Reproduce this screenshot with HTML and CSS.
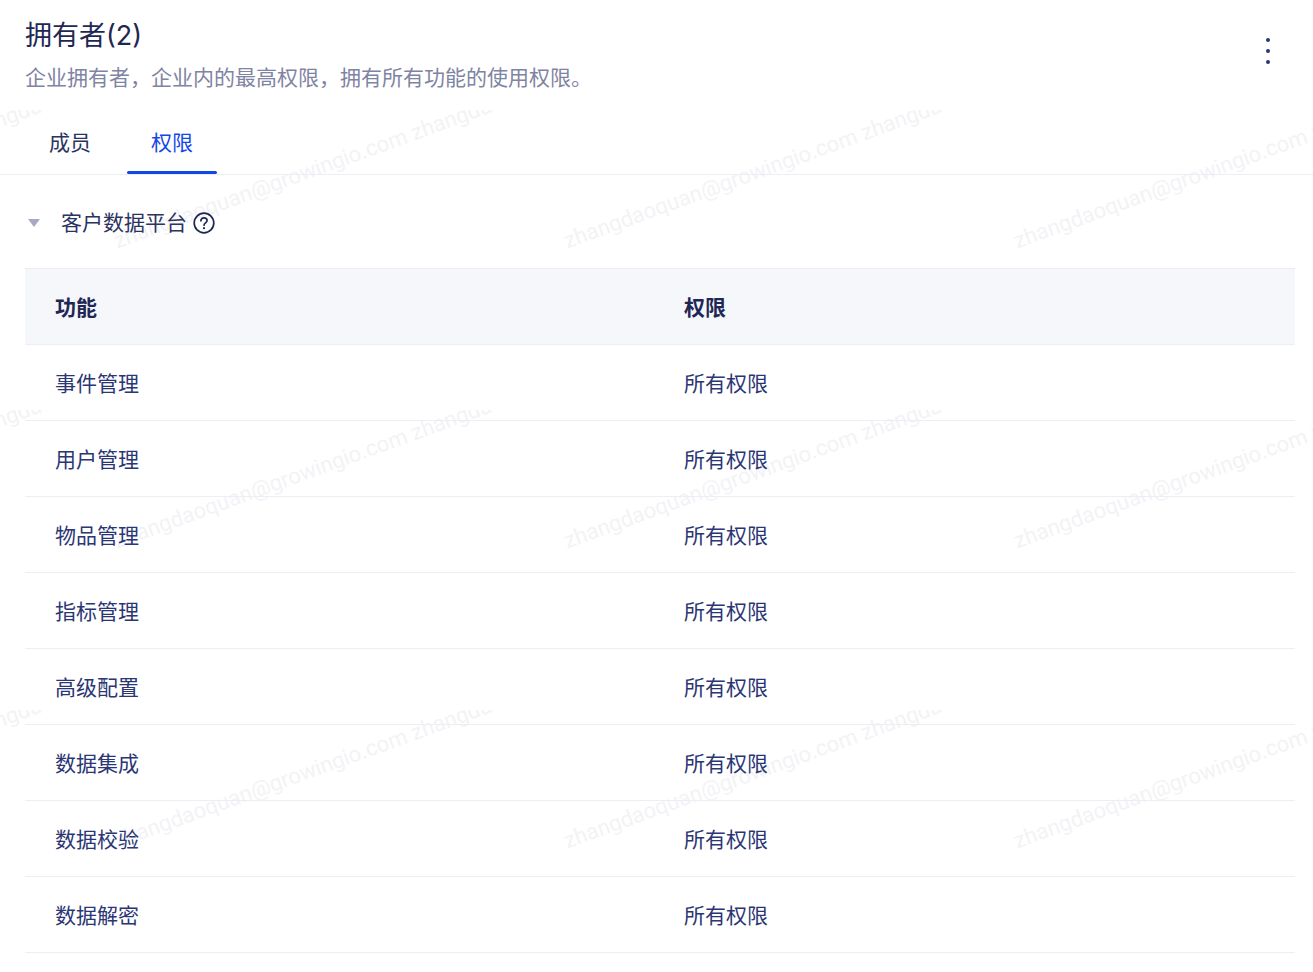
FILE: index.html
```html
<!DOCTYPE html>
<html lang="zh">
<head>
<meta charset="utf-8">
<title>拥有者</title>
<link rel="stylesheet" href="styles.css">
</head>
<body>
<div class="watermark" aria-hidden="true">
  <div class="tile"><span>zhangdaoquan@growingio.com zhangdaoquan@growingio.com</span></div>
  <div class="tile"><span>zhangdaoquan@growingio.com zhangdaoquan@growingio.com</span></div>
  <div class="tile"><span>zhangdaoquan@growingio.com zhangdaoquan@growingio.com</span></div>
  <div class="tile"><span>zhangdaoquan@growingio.com zhangdaoquan@growingio.com</span></div>
  <div class="tile"><span>zhangdaoquan@growingio.com zhangdaoquan@growingio.com</span></div>
  <div class="tile"><span>zhangdaoquan@growingio.com zhangdaoquan@growingio.com</span></div>
  <div class="tile"><span>zhangdaoquan@growingio.com zhangdaoquan@growingio.com</span></div>
  <div class="tile"><span>zhangdaoquan@growingio.com zhangdaoquan@growingio.com</span></div>
  <div class="tile"><span>zhangdaoquan@growingio.com zhangdaoquan@growingio.com</span></div>
  <div class="tile"><span>zhangdaoquan@growingio.com zhangdaoquan@growingio.com</span></div>
  <div class="tile"><span>zhangdaoquan@growingio.com zhangdaoquan@growingio.com</span></div>
  <div class="tile"><span>zhangdaoquan@growingio.com zhangdaoquan@growingio.com</span></div>
</div>
<main class="page">
  <header class="head">
    <div class="head-text">
      <h1 class="title">拥有者(2)</h1>
      <p class="subtitle">企业拥有者，企业内的最高权限，拥有所有功能的使用权限。</p>
    </div>
    <button class="more" type="button" aria-label="更多">
      <i class="dot"></i><i class="dot"></i><i class="dot"></i>
    </button>
  </header>
  <nav class="tabs">
    <a class="tab">成员</a>
    <a class="tab tab-active">权限</a>
  </nav>
  <section class="group">
    <div class="group-head">
      <i class="caret"></i>
      <span class="group-name">客户数据平台</span>
      <svg class="help" width="22" height="22" viewBox="0 0 22 22" fill="none">
        <circle cx="11" cy="11" r="9.8" stroke="#1f2855" stroke-width="1.7"/>
        <path d="M7.9 8.8c0-1.8 1.3-3 3.1-3s3.1 1.2 3.1 2.8c0 2.3-3.1 2.3-3.1 4.6" stroke="#1f2855" stroke-width="1.7" stroke-linecap="round"/>
        <circle cx="11" cy="16.2" r="1.1" fill="#1f2855"/>
      </svg>
    </div>
    <table class="perm">
      <thead>
        <tr><th class="col-a">功能</th><th>权限</th></tr>
      </thead>
      <tbody>
        <tr><td>事件管理</td><td>所有权限</td></tr>
        <tr><td>用户管理</td><td>所有权限</td></tr>
        <tr><td>物品管理</td><td>所有权限</td></tr>
        <tr><td>指标管理</td><td>所有权限</td></tr>
        <tr><td>高级配置</td><td>所有权限</td></tr>
        <tr><td>数据集成</td><td>所有权限</td></tr>
        <tr><td>数据校验</td><td>所有权限</td></tr>
        <tr><td>数据解密</td><td>所有权限</td></tr>
      </tbody>
    </table>
  </section>
</main>
</body>
</html>
```
FILE: styles.css
```css
* { box-sizing: border-box; }
html, body { margin: 0; padding: 0; background: #fff; }
body {
  position: relative;
  height: 972px;
  overflow: hidden;
  font-family: "Noto Sans CJK SC", "Noto Sans", sans-serif;
  color: #2b3674;
}
.watermark {
  position: absolute;
  left: -390px;
  top: 110px;
  width: 1800px;
  display: grid;
  grid-template-columns: repeat(4, 450px);
  grid-auto-rows: 300px;
  pointer-events: none;
}
.tile { position: relative; overflow: hidden; }
.tile span {
  position: absolute;
  left: 60px;
  top: 116px;
  white-space: nowrap;
  font: 22px/30px Roboto, "Liberation Sans", Arial, sans-serif;
  color: #f3f3f6;
  transform-origin: left bottom;
  transform: rotate(-20deg);
}
.page { position: relative; }
.head {
  display: flex;
  justify-content: space-between;
  height: 110px;
  padding: 16px 35px 0 25px;
}
.title {
  margin: 0;
  font-family: "Inter", "Noto Sans CJK SC", sans-serif;
  font-size: 27px;
  line-height: 40px;
  font-weight: 400;
  color: #1f2855;
}
.subtitle {
  margin: 4px 0 0;
  font-size: 21px;
  line-height: 32px;
  color: #7f84a3;
}
.more {
  display: flex;
  flex-direction: column;
  gap: 7px;
  margin: 22px 0 0;
  padding: 0;
  border: 0;
  background: none;
  width: 20px;
  height: 30px;
  align-items: center;
}
.dot { width: 4px; height: 4px; border-radius: 50%; background: #2b3674; }
.tabs {
  display: flex;
  height: 65px;
  padding-left: 25px;
  border-bottom: 1px solid #ecedf5;
}
.tab {
  position: relative;
  width: 90px;
  margin-right: 12px;
  text-align: center;
  font-size: 21px;
  line-height: 63px;
  height: 64px;
  color: #2b3361;
}
.tab-active { color: #1248e9; }
.tab-active::after {
  content: "";
  position: absolute;
  left: 0;
  right: 0;
  bottom: 0;
  height: 3px;
  border-radius: 2px;
  background: #1248e9;
}
.group { padding: 0 18px 0 25px; }
.group-head {
  display: flex;
  align-items: center;
  height: 93px;
  font-size: 21px;
  color: #2b3361;
}
.caret {
  width: 0;
  height: 0;
  margin: 2px 21px 0 3px;
  border-left: 6px solid transparent;
  border-right: 6px solid transparent;
  border-top: 8px solid #a6a9bf;
}
.group-name { line-height: 32px; margin-bottom: 2px; }
.help { margin: 2px 0 0 6px; }
.perm {
  width: 1270px;
  border-collapse: collapse;
  table-layout: fixed;
  font-size: 21px;
}
.perm th, .perm td {
  height: 76px;
  padding: 0 0 2px 30px;
  text-align: left;
  border-bottom: 1px solid #ecedf5;
  font-weight: 400;
}
.perm th {
  background: #f6f7fb;
  border-top: 1px solid #ecedf5;
  font-weight: 700;
  color: #1f2855;
}
.col-a { width: 629px; }
```
